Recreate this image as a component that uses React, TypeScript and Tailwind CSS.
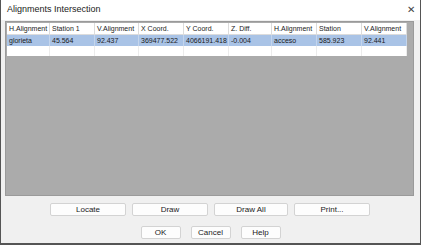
const columns = [
  { name: 'H.Alignment', w: 'w-[43px]' },
  { name: 'Station 1', w: 'w-[45px]' },
  { name: 'V.Alignment', w: 'w-[44px]' },
  { name: 'X Coord.', w: 'w-[45px]' },
  { name: 'Y Coord.', w: 'w-[45px]' },
  { name: 'Z. Diff.', w: 'w-[43px]' },
  { name: 'H.Alignment', w: 'w-[45px]' },
  { name: 'Station', w: 'w-[45px]' },
  { name: 'V.Alignment', w: 'w-[45px]' },
]

const row = ['glorieta', '45.564', '92.437', '369477.522', '4066191.418', '-0.004', 'acceso', '585.923', '92.441']

function Button({ label, w }: { label: string; w: string }) {
  return (
    <div
      className={`${w} flex h-[13px] items-center justify-center rounded-[2px] border border-[#d3d3d3] bg-[#fdfdfd] text-[8px] text-[#1a1a1a]`}
    >
      {label}
    </div>
  )
}

export default function App() {
  return (
    <div className="flex h-[245px] w-[421px] flex-col border-x border-b-2 border-[#555] bg-[#f0f0f0] font-['Liberation_Sans',Arial,sans-serif]">
      <div className="flex h-[20px] items-center justify-between bg-white pl-[6px] pr-[5px]">
        <span className="text-[9px] text-[#222]">Alignments Intersection</span>
        <span className="text-[10px] leading-none text-[#444]">✕</span>
      </div>

      <div className="ml-[4px] mt-[1px] h-[175px] w-[409px] border border-[#9a9a9a] bg-[#ababab] pl-[1px] pt-[1px]">
        <div className="w-[400px] bg-white">
          <div className="flex h-[12px] border-b border-[#dcdcdc]">
            {columns.map((c, i) => (
              <div
                key={i}
                className={`${c.w} flex items-center border-r border-[#dcdcdc] pl-[2px] text-[7px] leading-none text-[#222]`}
              >
                {c.name}
              </div>
            ))}
          </div>
          <div className="flex h-[11px] bg-[#a9c3e6]">
            {row.map((v, i) => (
              <div
                key={i}
                className={`${columns[i].w} flex items-center border-r border-[#c4d5ec] pl-[2px] text-[7px] leading-none text-[#1a1a1a]`}
              >
                {v}
              </div>
            ))}
          </div>
          <div className="flex h-[10px]">
            {columns.map((c, i) => (
              <div key={i} className={`${c.w} border-r border-[#ececec]`} />
            ))}
          </div>
        </div>
      </div>

      <div className="mt-[7px] flex justify-center gap-[6px] pr-[1px]">
        <Button label="Locate" w="w-[76px]" />
        <Button label="Draw" w="w-[76px]" />
        <Button label="Draw All" w="w-[74px]" />
        <Button label="Print..." w="w-[76px]" />
      </div>

      <div className="mt-[10px] flex justify-center gap-[10px]">
        <Button label="OK" w="w-[40px]" />
        <Button label="Cancel" w="w-[40px]" />
        <Button label="Help" w="w-[40px]" />
      </div>
    </div>
  )
}
